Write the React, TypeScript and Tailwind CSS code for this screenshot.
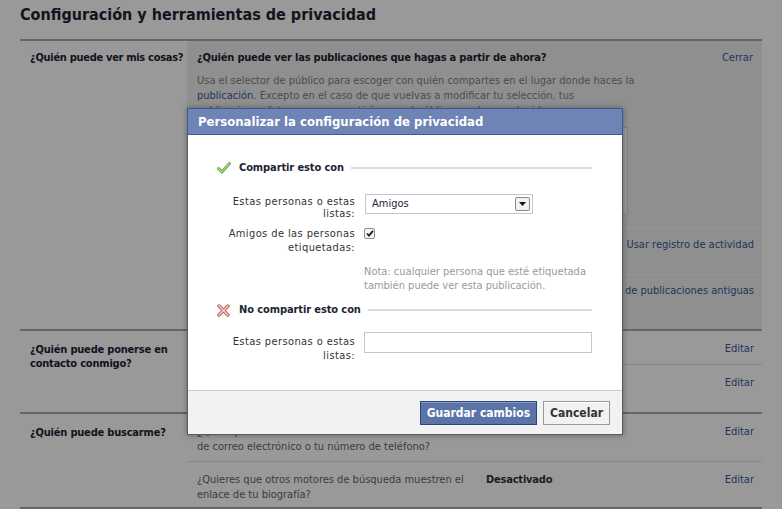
function CheckIcon() {
  return (
    <svg width="14" height="12" viewBox="0 0 14 12" className="shrink-0">
      <path d="M1.5 6.5 L5 10 L12.5 1.5" fill="none" stroke="#6fae4a" strokeWidth="3" strokeLinecap="round" strokeLinejoin="round" />
      <path d="M1.5 6.5 L5 10 L12.5 1.5" fill="none" stroke="#c6e6a8" strokeWidth="1" strokeLinecap="round" strokeLinejoin="round" />
    </svg>
  );
}

function CrossIcon() {
  return (
    <svg width="13" height="13" viewBox="0 0 13 13" className="shrink-0">
      <path d="M2 2 L11 11 M11 2 L2 11" fill="none" stroke="#c0625a" strokeWidth="3.4" strokeLinecap="round" />
      <path d="M2 2 L11 11 M11 2 L2 11" fill="none" stroke="#f4d2cc" strokeWidth="1.4" strokeLinecap="round" />
    </svg>
  );
}

function SubRow({ q, value, link, h }: { q: React.ReactNode; value?: string; link: string; h: string }) {
  return (
    <div className={`flex items-start pl-[10px] pr-[8px] pt-[10px] border-b border-[#e2e2e2] last:border-b-0 ${h}`}>
      <div className="w-[282px] text-[#666] leading-[15px]">{q}</div>
      <div className="w-[200px] pl-[7px] font-bold tracking-[-0.2px] text-[#333]">{value}</div>
      <div className="flex-1 text-right text-[#3b5998]">{link}</div>
    </div>
  );
}

export default function App() {
  return (
    <div
      className="relative w-[782px] h-[509px] overflow-hidden bg-white text-[11px] text-[#333]"
      style={{ fontFamily: '"DejaVu Sans Condensed", "DejaVu Sans", sans-serif' }}
    >
      {/* page behind the dialog */}
      <div className="px-[20px]">
        <h1 className="h-[41px] pt-[3px] text-[16px] font-bold text-[#1c2433] border-b-2 border-[#a9a9a9]">
          Configuración y herramientas de privacidad
        </h1>

        {/* who can see my stuff */}
        <div className="flex border-b-2 border-[#a9a9a9]">
          <div className="w-[167px] pl-[10px] pt-[9px] font-bold tracking-[-0.3px] text-[#1c2433] whitespace-nowrap">¿Quién puede ver mis cosas?</div>
          <div className="flex-1 bg-[#eeeeee] h-[288px]">
            <div className="flex justify-between pl-[10px] pr-[9px] pt-[9px]">
              <span className="font-bold tracking-[-0.2px] text-[#1c2433]">¿Quién puede ver las publicaciones que hagas a partir de ahora?</span>
              <span className="text-[#3b5998]">Cerrar</span>
            </div>
            <p className="pl-[10px] w-[450px] mt-[6px] leading-[15px] text-[#808080]">
              Usa el selector de público para escoger con quién compartes en el lugar donde haces la{" "}
              <span className="text-[#3b5998]">publicación</span>. Excepto en el caso de que vuelvas a modificar tu selección, tus
              publicaciones futuras se compartirán con el público que hayas elegido.
            </p>
            <div className="ml-[10px] mt-[9px] w-[431px] h-[88px] bg-white border border-[#d8d8d8]" />
            <div className="mt-[13px] border-t border-[#f9f9f9]">
              <div className="h-[46px] flex justify-end pr-[8px] pt-[8px] text-[#3b5998] border-b border-[#f9f9f9]">
                Usar registro de actividad
              </div>
              <div className="flex justify-end pr-[8px] pt-[8px] text-[#3b5998]">
                Limitar el público de publicaciones antiguas
              </div>
            </div>
          </div>
        </div>

        {/* who can contact me */}
        <div className="flex border-b-2 border-[#a9a9a9]">
          <div className="w-[167px] pl-[10px] pr-[4px] pt-[12px] font-bold tracking-[-0.2px] text-[#1c2433] leading-[14px]">
            ¿Quién puede ponerse en contacto conmigo?
          </div>
          <div className="flex-1">
            <SubRow q="¿Quién puede enviarte solicitudes de amistad?" value="Todos" link="Editar" h="h-[34px]" />
            <SubRow q="¿De quién quieres filtrar los mensajes?" value="Filtrado básico" link="Editar" h="h-[47px]" />
          </div>
        </div>

        {/* who can look me up */}
        <div className="flex border-b-2 border-[#a9a9a9]">
          <div className="w-[167px] pl-[10px] pt-[11px] font-bold tracking-[-0.2px] text-[#1c2433]">¿Quién puede buscarme?</div>
          <div className="flex-1">
            <SubRow
              q={
                <>
                  ¿Quién puede buscarte usando la dirección
                  <br />
                  de correo electrónico o tu número de teléfono?
                </>
              }
              value="Todos"
              link="Editar"
              h="h-[48px]"
            />
            <SubRow
              q="¿Quieres que otros motores de búsqueda muestren el enlace de tu biografía?"
              value="Desactivado"
              link="Editar"
              h="h-[45px]"
            />
          </div>
        </div>
      </div>

      {/* dimming overlay */}
      <div className="absolute inset-0 bg-black/40" />

      {/* dialog */}
      <div className="absolute left-[187px] top-[108px] w-[436px] h-[327px] flex flex-col bg-white border border-[#5a5a5a] shadow-[0_0_6px_rgba(0,0,0,0.35)]">
        <div className="h-[27px] shrink-0 bg-[#6d84b4] border border-[#3b5998] -m-px mb-0 flex items-center pl-[10px] text-[13px] font-bold text-white">
          Personalizar la configuración de privacidad
        </div>

        <div className="flex-1 pt-[25px] pr-[30px]">
          <div className="flex items-center pl-[29px] h-[16px]">
            <CheckIcon />
            <span className="ml-[8px] font-bold tracking-[-0.1px] text-[#1c2433]">Compartir esto con</span>
            <div className="flex-1 ml-[7px] h-[2px] bg-[#dcdcdc]" />
          </div>

          <div className="flex mt-[20px]">
            <div className="w-[167px] flex justify-end">
              <div className="w-[132px] text-right leading-[12px] tracking-[0.4px] text-[#333]">Estas personas o estas listas:</div>
            </div>
            <div className="ml-[10px] w-[168px] h-[20px] -mt-[2px] border border-[#bdc7d8] flex items-center justify-between pl-[6px] pr-[2px]">
              <span className="text-[#1c2433]">Amigos</span>
              <span className="w-[15px] h-[14px] border border-[#8a8a8a] rounded-[2px] bg-[#f2f2f2] flex items-center justify-center">
                <svg width="7" height="4" viewBox="0 0 7 4"><path d="M0 0 H7 L3.5 4 Z" fill="#111" /></svg>
              </span>
            </div>
          </div>

          <div className="flex mt-[7px]">
            <div className="w-[167px] text-right leading-[14px] tracking-[0.4px] text-[#333]">Amigos de las personas etiquetadas:</div>
            <div className="ml-[9px] mt-[1px] w-[11px] h-[11px] border border-[#8f8f8f] rounded-[2px] bg-[#f4f4f4] flex items-center justify-center">
              <svg width="8" height="7" viewBox="0 0 8 7"><path d="M1 3.5 L3 5.6 L7 0.8" fill="none" stroke="#222" strokeWidth="1.8" /></svg>
            </div>
          </div>

          <p className="ml-[176px] mt-[10px] leading-[14px] text-[#999]">
            Nota: cualquier persona que esté etiquetada también puede ver esta publicación.
          </p>

          <div className="flex items-center pl-[29px] h-[16px] mt-[9px]">
            <CrossIcon />
            <span className="ml-[9px] font-bold tracking-[-0.1px] text-[#1c2433]">No compartir esto con</span>
            <div className="flex-1 ml-[7px] h-[2px] bg-[#dcdcdc]" />
          </div>

          <div className="flex mt-[17px]">
            <div className="w-[167px] flex justify-end">
              <div className="w-[132px] text-right leading-[14px] tracking-[0.4px] text-[#333]">Estas personas o estas listas:</div>
            </div>
            <div className="ml-[9px] flex-1 h-[21px] -mt-[3px] border border-[#bdc7d8]" />
          </div>
        </div>

        <div className="h-[44px] shrink-0 bg-[#f2f2f2] border-t border-[#cccccc] flex items-center justify-end gap-[6px] pr-[12px]">
          <button className="h-[24px] px-[6px] bg-[#5b74a8] border border-[#29447e] text-white text-[12px] font-bold shadow-[inset_0_1px_0_#8a9cc2]">
            Guardar cambios
          </button>
          <button className="h-[24px] px-[6px] bg-[#f2f2f2] border border-[#999] text-[#333] text-[12px] font-bold shadow-[inset_0_1px_0_#fff]">
            Cancelar
          </button>
        </div>
      </div>
    </div>
  );
}
